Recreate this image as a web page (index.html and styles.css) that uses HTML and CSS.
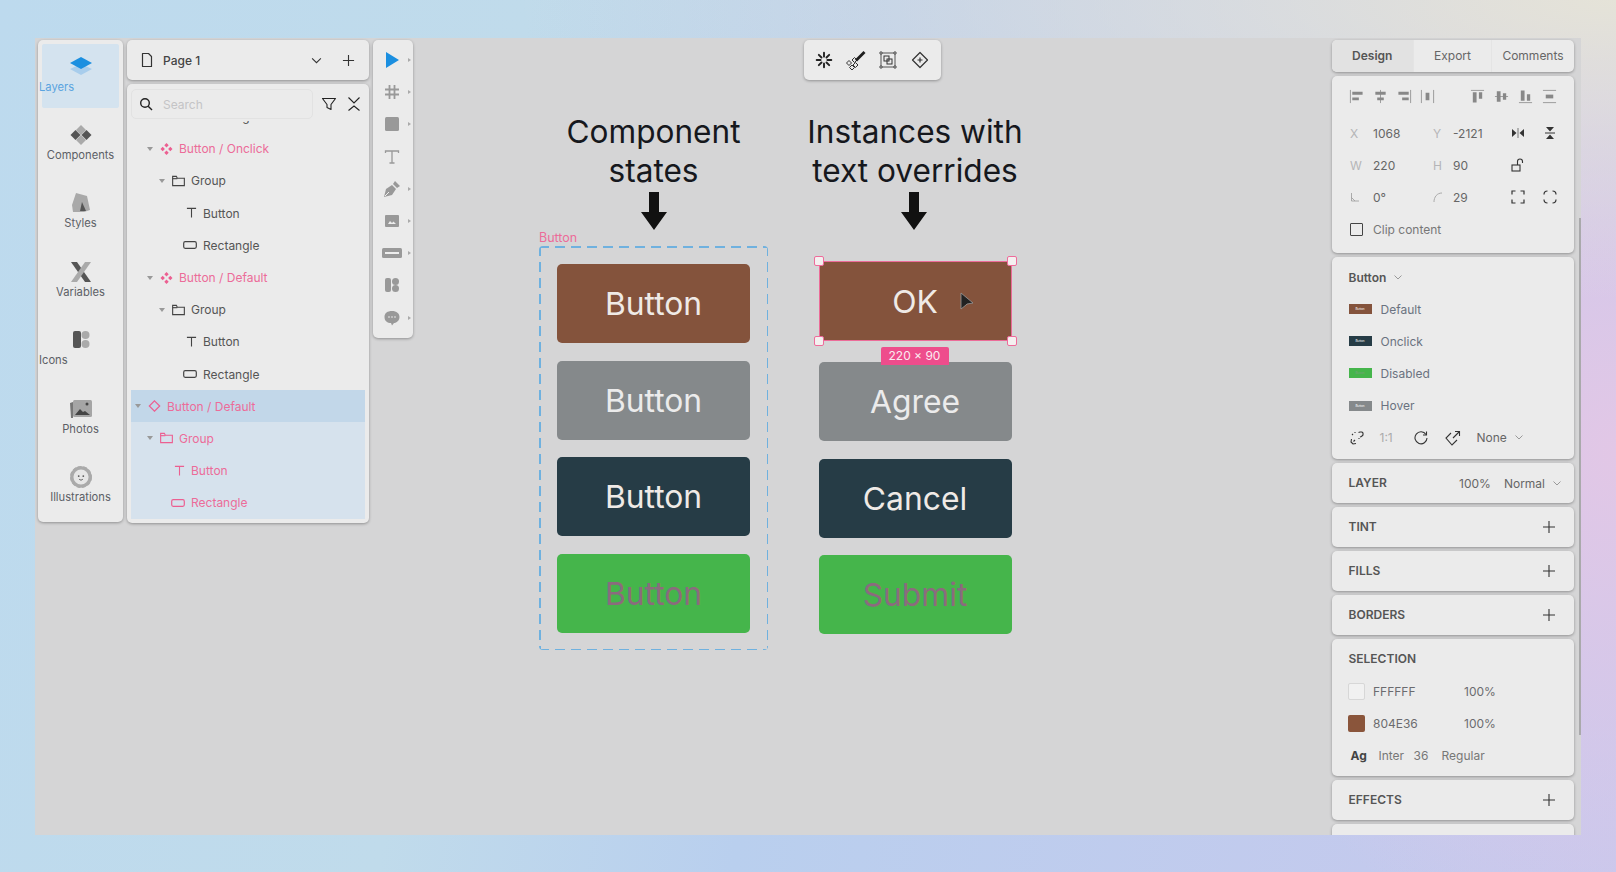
FILE: index.html
```html
<!DOCTYPE html>
<html lang="en">
<head>
<meta charset="utf-8">
<title>Button component</title>
<link rel="stylesheet" href="styles.css">
</head>
<body>
<main class="app">
  <section class="canvas">
    <div class="quick panel">
      <svg class="q" viewBox="0 0 16 16"><g stroke="#222" stroke-width="1.7" stroke-linecap="round"><path d="M8 1.5v3.500M8 11v3.500M1.500 8H5M11 8h3.500M3.400 3.400l2.400 2.400M10.200 10.200l2.400 2.400M3.400 12.600l2.400-2.400M10.200 5.800l2.400-2.400"/></g></svg>
      <svg class="q q-brush" viewBox="0 0 22 22"><path d="M7 11l2.500-2.500L12 11l-2.500 2.500zM1.500 14L4 11.500 6.500 14 4 16.500zM8 16l2.500-2.500L13 16l-2.500 2.500zM4.500 18.500L7 16l2.500 2.500L7 21z" fill="#e8e8e8" stroke="#333"/><path d="M10 10.500l8.500-8.500 2 2-8.500 8.500z" fill="#1d1d1d"/></svg>
      <svg class="q" viewBox="0 0 18 18"><rect x="2" y="2" width="14" height="14" fill="none" stroke="#555"/><g fill="#ddd" stroke="#444"><circle cx="2" cy="2" r="1.200"/><circle cx="16" cy="2" r="1.200"/><circle cx="2" cy="16" r="1.200"/><circle cx="16" cy="16" r="1.200"/></g><rect x="5" y="5" width="5" height="5" fill="none" stroke="#333"/><rect x="8" y="8" width="5" height="5" fill="none" stroke="#333"/></svg>
      <svg class="q" viewBox="0 0 18 18"><path d="M9 1.500L16.500 9 9 16.500 1.500 9z" fill="none" stroke="#333" stroke-width="1.200" stroke-linejoin="round"/><path d="M9 6.500v5M6.500 9h5" stroke="#333" stroke-width="1.200"/></svg>
    </div>

    <div class="board board-states">
      <h2 class="title">Component<br>states</h2>
      <svg class="arrow" viewBox="0 0 26 38"><path d="M8 0h10v20h8L13 38 0 20h8z" fill="#111"/></svg>
      <div class="set-name">Button</div>
      <div class="set">
        <div class="btn brown">Button</div>
        <div class="btn gray">Button</div>
        <div class="btn dark">Button</div>
        <div class="btn green">Button</div>
      </div>
    </div>

    <div class="board board-instances">
      <h2 class="title">Instances with<br>text overrides</h2>
      <svg class="arrow arrow-off" viewBox="0 0 26 38"><path d="M8 0h10v20h8L13 38 0 20h8z" fill="#111"/></svg>
      <div class="stack">
        <div class="btn brown selected">OK
          <i class="handle tl"></i><i class="handle tr"></i><i class="handle bl"></i><i class="handle br"></i>
          <svg class="cursor" viewBox="0 0 14 18"><path d="M1 1l12 10-6 1-1 1-5 4z" fill="#222" stroke="#999" stroke-width=".8"/></svg>
          <span class="size">220 × 90</span>
        </div>
        <div class="btn gray">Agree</div>
        <div class="btn dark">Cancel</div>
        <div class="btn green">Submit</div>
      </div>
    </div>
  </section>

  <aside class="left">
    <nav class="rail panel">
      <a class="rail-item active">
        <svg class="rail-icon" viewBox="0 0 22 20"><path d="M11 8L22 13 11 19 0 13z" fill="#a8cdec"/><path d="M11 1L22 7 11 13 0 7z" fill="#1b8fe0"/></svg>
        <span class="rail-label off">Layers</span>
      </a>
      <a class="rail-item">
        <svg class="rail-icon" viewBox="0 0 22 20"><path d="M11 0l5 5-5 5-5-5z" fill="#aaa"/><path d="M5.500 5l5 5-5 5-5-5z" fill="#555"/><path d="M16.500 5l5 5-5 5-5-5z" fill="#555"/><path d="M11 10l5 5-5 5-5-5z" fill="#aaa"/></svg>
        <span class="rail-label">Components</span>
      </a>
      <a class="rail-item">
        <svg class="rail-icon" viewBox="0 0 22 20"><path d="M6 0l11 3 3 14-6 2H3L2 12z" fill="#a9a9a9"/><path d="M12 9l4 9h-6z" fill="#555"/></svg>
        <span class="rail-label">Styles</span>
      </a>
      <a class="rail-item">
        <svg class="rail-icon" viewBox="0 0 22 20"><path d="M1 0h6l14 20h-6z" fill="#555"/><path d="M21 0h-6L1 20h6z" fill="#aaa"/></svg>
        <span class="rail-label">Variables</span>
      </a>
      <a class="rail-item">
        <svg class="rail-icon" viewBox="0 0 22 20"><rect x="3" y="1" width="8" height="17" rx="2" fill="#555"/><circle cx="15.500" cy="5" r="4" fill="#aaa"/><circle cx="15.500" cy="14" r="4" fill="#aaa"/></svg>
        <span class="rail-label off">Icons</span>
      </a>
      <a class="rail-item">
        <svg class="rail-icon" viewBox="0 0 22 20"><path d="M0 4l3-1v16H1z" fill="#777"/><rect x="3" y="1" width="19" height="17" rx="1.500" fill="#a5a5a5"/><path d="M5 16l5-6 3 3 2-1 5 4z" fill="#444"/><circle cx="17" cy="5" r="1.500" fill="#444"/></svg>
        <span class="rail-label">Photos</span>
      </a>
      <a class="rail-item">
        <svg class="rail-icon" viewBox="0 0 24 24"><circle cx="12" cy="12" r="10" fill="#e6e6e6" stroke="#aaa" stroke-width="3.500"/><circle cx="12" cy="12" r="11" fill="none" stroke="#aaa" stroke-width="2" stroke-dasharray="4 2"/><circle cx="9.500" cy="11" r="1" fill="#555"/><circle cx="14.500" cy="11" r="1" fill="#555"/><path d="M10 14.500q2 2 4 0" stroke="#555" fill="none"/></svg>
        <span class="rail-label">Illustrations</span>
      </a>
    </nav>

    <div class="middle">
      <header class="page-bar panel">
        <svg class="i16" viewBox="0 0 16 16"><path d="M3.500 1.500h6l3 3v10h-9z" fill="none" stroke="#333" stroke-width="1.200" stroke-linejoin="round"/></svg>
        <span class="page-name">Page 1</span>
        <svg class="page-chevron" viewBox="0 0 12 8"><path d="M1 1.500l5 5 5-5" fill="none" stroke="#333" stroke-width="1.200"/></svg>
        <svg class="plus" viewBox="0 0 14 14"><path d="M7 1v12M1 7h12" stroke="#333" stroke-width="1.200"/></svg>
      </header>

      <section class="layers panel">
        <div class="search-row">
          <div class="search">
            <svg class="i14" viewBox="0 0 14 14"><circle cx="6" cy="6" r="4.300" fill="none" stroke="#222" stroke-width="1.400"/><path d="M9.200 9.200L13 13" stroke="#222" stroke-width="1.400"/></svg>
            <span class="search-text">Search</span>
          </div>
          <svg class="i16 filter" viewBox="0 0 16 16"><path d="M1.500 2.500h13L10 8.500v5l-4-2v-3z" fill="none" stroke="#222" stroke-width="1.100" stroke-linejoin="round"/></svg>
          <svg class="i16" viewBox="0 0 16 16"><path d="M2.500 1.500L8 7l5.500-5.500M2.500 14.500L8 10l5.500 4.500" fill="none" stroke="#222" stroke-width="1.100"/></svg>
        </div>
        <ul class="tree">
          <li class="row d3"><svg class="ico rect" viewBox="0 0 14 8"><rect x=".7" y=".7" width="12.600" height="6.600" rx="1.500"/></svg>Rectangle</li>
          <li class="row d1 comp"><b class="caret"></b><svg class="ico" viewBox="0 0 12 12"><path class="fillp" d="M6 0l2.200 2.200L6 4.400 3.800 2.200zM2.200 3.800l2.200 2.200-2.200 2.200L0 6zM9.800 3.800L12 6 9.800 8.200 7.600 6zM6 7.600l2.200 2.200L6 12 3.800 9.800z"/></svg>Button / Onclick</li>
          <li class="row d2"><b class="caret"></b><svg class="ico folder" viewBox="0 0 14 12"><path d="M.7 11V1h4l1 2h7.600v8z"/><path d="M.7 3.500h5"/></svg>Group</li>
          <li class="row d3"><svg class="ico t" viewBox="0 0 12 12"><path d="M1 1h10M6 1v10"/></svg>Button</li>
          <li class="row d3"><svg class="ico rect" viewBox="0 0 14 8"><rect x=".7" y=".7" width="12.600" height="6.600" rx="1.500"/></svg>Rectangle</li>
          <li class="row d1 comp"><b class="caret"></b><svg class="ico" viewBox="0 0 12 12"><path class="fillp" d="M6 0l2.200 2.200L6 4.400 3.800 2.200zM2.200 3.800l2.200 2.200-2.200 2.200L0 6zM9.800 3.800L12 6 9.800 8.200 7.600 6zM6 7.600l2.200 2.200L6 12 3.800 9.800z"/></svg>Button / Default</li>
          <li class="row d2"><b class="caret"></b><svg class="ico folder" viewBox="0 0 14 12"><path d="M.7 11V1h4l1 2h7.600v8z"/><path d="M.7 3.500h5"/></svg>Group</li>
          <li class="row d3"><svg class="ico t" viewBox="0 0 12 12"><path d="M1 1h10M6 1v10"/></svg>Button</li>
          <li class="row d3"><svg class="ico rect" viewBox="0 0 14 8"><rect x=".7" y=".7" width="12.600" height="6.600" rx="1.500"/></svg>Rectangle</li>
          <li class="row d0 comp sel-main"><b class="caret"></b><svg class="ico" viewBox="0 0 12 12"><path d="M6 .8L11.200 6 6 11.200.8 6z"/></svg>Button / Default</li>
          <li class="row d1 comp sel"><b class="caret"></b><svg class="ico folder" viewBox="0 0 14 12"><path d="M.7 11V1h4l1 2h7.600v8z"/><path d="M.7 3.500h5"/></svg>Group</li>
          <li class="row d2-t comp sel"><svg class="ico t" viewBox="0 0 12 12"><path d="M1 1h10M6 1v10"/></svg>Button</li>
          <li class="row d2-t comp sel"><svg class="ico rect" viewBox="0 0 14 8"><rect x=".7" y=".7" width="12.600" height="6.600" rx="1.500"/></svg>Rectangle</li>
        </ul>
      </section>
    </div>

    <div class="tools panel">
      <div class="tool more"><svg viewBox="0 0 16 16"><path d="M2 0l13 8-13 8z" fill="#1b8fe0"/></svg></div>
      <div class="tool more"><svg viewBox="0 0 16 16"><path d="M5.500 1v14M10.500 1v14M1 5.500h14M1 10.500h14" stroke="#999" stroke-width="1.800" fill="none"/></svg></div>
      <div class="tool more"><svg viewBox="0 0 16 16"><rect x="1" y="1" width="14" height="14" rx="1.500" fill="#999"/></svg></div>
      <div class="tool"><svg viewBox="0 0 16 16"><path d="M1.500 4V2h13v2M8 2v12M5.500 14h5" stroke="#999" stroke-width="1.300" fill="none"/></svg></div>
      <div class="tool more"><svg viewBox="0 0 16 16"><path d="M0 16l2-8 6-4 4 4-4 6zM9 3l2-3 5 5-3 2z" fill="#999"/><path d="M1 15l4-4" stroke="#eee"/></svg></div>
      <div class="tool more"><svg viewBox="0 0 16 16"><rect x="1" y="2" width="14" height="12" rx="1" fill="#999"/><path d="M4 11l2-3 2 2 1.500-1.500L12 11z" fill="#eee"/></svg></div>
      <div class="tool more"><svg class="wide" viewBox="0 0 20 10"><rect width="20" height="10" rx="1.500" fill="#999"/><rect x="3" y="4" width="14" height="2" fill="#eee"/></svg></div>
      <div class="tool"><svg viewBox="0 0 16 16"><rect x="1" y="1" width="6" height="14" rx="2" fill="#999"/><circle cx="11.500" cy="4.500" r="3.500" fill="#999"/><circle cx="11.500" cy="11.500" r="3.500" fill="#999"/></svg></div>
      <div class="tool more"><svg viewBox="0 0 16 16"><path d="M8 1c4.500 0 7.500 2.500 7.500 6S12.500 13 10 13l-2 2.500L7 13C3.500 13 .5 11 .5 7S3.500 1 8 1z" fill="#999"/><g fill="#eee"><circle cx="5" cy="7" r=".8"/><circle cx="8" cy="7" r=".8"/><circle cx="11" cy="7" r=".8"/></g></svg></div>
    </div>
  </aside>

  <aside class="right">
    <div class="tabs panel">
      <span class="tab on">Design</span>
      <span class="tab mid">Export</span>
      <span class="tab">Comments</span>
    </div>

    <section class="card panel geometry">
      <div class="aligns">
        <svg viewBox="0 0 16 16"><path d="M1.500 1v14" stroke="#999"/><path d="M3.500 3h11v3h-11zM3.500 9h7v3h-7z" fill="#888"/></svg>
        <svg viewBox="0 0 16 16"><path d="M8 1v14" stroke="#999"/><path d="M2.500 3h11v3h-11zM4.500 9h7v3h-7z" fill="#888"/></svg>
        <svg viewBox="0 0 16 16"><path d="M14.500 1v14" stroke="#999"/><path d="M1.500 3h11v3h-11zM5.500 9h7v3h-7z" fill="#888"/></svg>
        <svg viewBox="0 0 16 16"><path d="M1.500 1v14M14.500 1v14" stroke="#999"/><rect x="6" y="4" width="4" height="8" fill="#888"/></svg>
        <span class="aligns-gap"></span>
        <svg viewBox="0 0 16 16"><path d="M1 1.500h14" stroke="#999"/><path d="M3 3.500h4v11H3zM9.500 3.500h3.500v7H9.500z" fill="#888"/></svg>
        <svg viewBox="0 0 16 16"><path d="M1 8h14" stroke="#999"/><path d="M3 2.500h4v11H3zM9.500 4.500h3.500v7H9.500z" fill="#888"/></svg>
        <svg viewBox="0 0 16 16"><path d="M1 14.500h14" stroke="#999"/><path d="M3 1.500h4v11H3zM9.500 5.500h3.500v7H9.500z" fill="#888"/></svg>
        <svg viewBox="0 0 16 16"><path d="M1 1.500h14M1 14.500h14" stroke="#999"/><rect x="4" y="6" width="8" height="4" fill="#888"/></svg>
      </div>
      <div class="fields">
        <span class="lab">X</span><span class="val">1068</span><span class="lab">Y</span><span class="val">-2121</span>
        <svg class="fi" viewBox="0 0 14 14"><path d="M1 3l4.500 4L1 11zM13 3L8.500 7l4.500 4z" fill="#333"/><path d="M7 2v10" stroke="#777"/></svg>
        <svg class="fi" viewBox="0 0 14 14"><path d="M3 1h8L7 5.500zM3 13l4-4.500 4 4.500z" fill="#333"/><path d="M2 7h10" stroke="#333"/></svg>
        <span class="lab">W</span><span class="val">220</span><span class="lab">H</span><span class="val">90</span>
        <svg class="fi" viewBox="0 0 14 14"><rect x="1" y="7" width="8" height="6" fill="none" stroke="#333" stroke-width="1.100"/><path d="M6.500 7V3.500a2.500 2.500 0 0 1 5 0V5" fill="none" stroke="#333" stroke-width="1.100"/></svg>
        <span></span>
        <span class="lab lab-ic"><svg viewBox="0 0 10 10"><path d="M1.500 1v8h7.500M1.500 5.500L5 9" fill="none" stroke="#999" stroke-width=".8"/></svg></span><span class="val">0°</span>
        <span class="lab lab-ic"><svg viewBox="0 0 10 10"><path d="M1 10C1 5 4 1 9 1" fill="none" stroke="#aaa"/></svg></span><span class="val">29</span>
        <svg class="fi" viewBox="0 0 14 14"><path d="M1 4.500V1h3.500M9.500 1H13v3.500M13 9.500V13H9.500M4.500 13H1V9.500" fill="none" stroke="#333" stroke-width="1.200"/></svg>
        <svg class="fi" viewBox="0 0 14 14"><path d="M1 4.500Q1 1 4.500 1M9.500 1Q13 1 13 4.500M13 9.500Q13 13 9.500 13M4.500 13Q1 13 1 9.500" fill="none" stroke="#333" stroke-width="1.200"/></svg>
      </div>
      <div class="clip"><i class="check"></i>Clip content</div>
    </section>

    <section class="card panel variants">
      <div class="v-title"><strong>Button</strong><svg class="chev" viewBox="0 0 8 5"><path d="M.5.500L4 4 7.500.500" fill="none" stroke="#999"/></svg></div>
      <div class="v-row"><span class="thumb t-brown">Button</span>Default</div>
      <div class="v-row"><span class="thumb t-dark">Button</span>Onclick</div>
      <div class="v-row"><span class="thumb t-green">Button</span>Disabled</div>
      <div class="v-row"><span class="thumb t-gray">Button</span>Hover</div>
      <div class="v-tools">
        <svg class="vt-link" viewBox="0 0 14 14"><path d="M5 9L3.500 10.500M1.500 8l-.5 3 2 2 3-.5M8.500 1.500l1.500-.5h2l1 1v2l-1.500 1.500-1.500.5M9 7v1M2 3l1 1M5 1v1" fill="none" stroke="#333" stroke-width="1.100"/></svg>
        <span class="vt-ratio">1:1</span>
        <svg class="vt-refresh" viewBox="0 0 14 14"><path d="M12 3.500A6 6 0 1 0 13 7" fill="none" stroke="#333" stroke-width="1.100"/><path d="M12.500 .5v3.500H9" fill="none" stroke="#333" stroke-width="1.100"/></svg>
        <svg class="vt-tag" viewBox="0 0 16 16"><path d="M6 3L1 8l6 7 5-5" fill="none" stroke="#333" stroke-width="1.100"/><path d="M8 8l6-6M10 1.500h4.500V6" fill="none" stroke="#333" stroke-width="1.100"/></svg>
        <span class="vt-none">None</span>
        <svg class="chev" viewBox="0 0 8 5"><path d="M.5.500L4 4 7.500.500" fill="none" stroke="#999"/></svg>
      </div>
    </section>

    <section class="card panel head layer">
      <h3>LAYER</h3><span class="pct">100%</span><span class="mode">Normal</span><svg class="chev" viewBox="0 0 8 5"><path d="M.5.500L4 4 7.500.500" fill="none" stroke="#999"/></svg>
    </section>
    <section class="card panel head"><h3>TINT</h3><svg class="add" viewBox="0 0 12 12"><path d="M6 0v12M0 6h12" stroke="#333" stroke-width="1.100"/></svg></section>
    <section class="card panel head"><h3>FILLS</h3><svg class="add" viewBox="0 0 12 12"><path d="M6 0v12M0 6h12" stroke="#333" stroke-width="1.100"/></svg></section>
    <section class="card panel head"><h3>BORDERS</h3><svg class="add" viewBox="0 0 12 12"><path d="M6 0v12M0 6h12" stroke="#333" stroke-width="1.100"/></svg></section>

    <section class="card panel selection">
      <h3>SELECTION</h3>
      <div class="s-row"><i class="swatch white"></i><span class="hex">FFFFFF</span><span>100%</span></div>
      <div class="s-row"><i class="swatch brownish"></i><span class="hex">804E36</span><span>100%</span></div>
      <div class="s-font"><strong>Ag</strong><span class="f1">Inter</span><span class="f2">36</span><span>Regular</span></div>
    </section>

    <section class="card panel head"><h3>EFFECTS</h3><svg class="add" viewBox="0 0 12 12"><path d="M6 0v12M0 6h12" stroke="#333" stroke-width="1.100"/></svg></section>
    <section class="card panel head"></section>
  </aside>
  <div class="scrollbar"></div>
</main>
</body>
</html>
```

FILE: styles.css
```css
* { box-sizing: border-box; }
html, body { height: 100%; }
body {
  margin: 0;
  overflow: hidden;
  font-family: Inter, "Liberation Sans", sans-serif;
  background:
    radial-gradient(ellipse 1100px 300px at 100% 0%, #e5e3d8 0%, rgba(229,227,216,0) 100%),
    radial-gradient(ellipse 420px 520px at 100% 52%, #e2c7e6 0%, rgba(226,199,230,0) 100%),
    linear-gradient(100deg, #bddaee 0%, #c0dbeb 30%, #b9cfee 50%, #c7c8ed 100%);
  padding: 38px 35px 37px 35px;
}
.app {
  position: relative;
  width: 1546px;
  height: 797px;
  background: #d5d5d6;
  overflow: hidden;
  color: #555;
  font-size: 12px;
}
.panel {
  background: #ebebeb;
  border-radius: 5px;
  box-shadow: 0 1px 3px rgba(0,0,0,.32);
}
svg { display: block; flex: none; }

/* canvas */
.canvas { position: absolute; inset: 0; }
.quick {
  position: absolute; left: 769px; top: 2px;
  width: 137px; height: 40px;
  display: flex; align-items: center;
  gap: 14px; padding: 0 11px;
}
.q { width: 18px; height: 18px; }
.q-brush { width: 22px; height: 22px; margin: 0 -2px; }
.board { position: absolute; display: flex; flex-direction: column; align-items: center; }
.board-states { left: 502px; top: 75px; width: 233px; }
.board-instances { left: 780px; top: 75px; width: 200px; }
.title {
  margin: 0; white-space: nowrap; text-align: center;
  font-weight: 400; font-size: 31.600px; line-height: 38.500px; color: #16181d;
}
.arrow { width: 26px; height: 38px; margin-top: 2px; }
.arrow-off { margin-right: 3px; }
.set-name {
  align-self: flex-start; height: 16px; line-height: 15px; margin-left: 2px;
  color: #ec6c99; font-size: 12.500px;
}
.set {
  display: flex; flex-direction: column; gap: 17.500px;
  width: 229px; height: 404px; padding: 1px 18px 0; justify-content: center;
  border-radius: 4px;
  background:
    linear-gradient(90deg, #6fb1df 60%, transparent 0) 0 0 / 16px 1.500px repeat-x,
    linear-gradient(90deg, #6fb1df 60%, transparent 0) 0 100% / 16px 1.500px repeat-x,
    linear-gradient(#6fb1df 60%, transparent 0) 0 0 / 1.500px 16px repeat-y,
    linear-gradient(#6fb1df 60%, transparent 0) 100% 0 / 1.500px 16px repeat-y;
}
.btn {
  position: relative; flex: none;
  display: flex; align-items: center; justify-content: center;
  width: 193px; height: 79px; border-radius: 5px;
  font-size: 31.800px; color: #efeae6;
}
.brown { background: #84533c; }
.gray { background: #85898b; color: #ebebeb; }
.dark { background: #263c46; }
.green { background: #45b54b; color: #8b6b7e; }
.stack { display: flex; flex-direction: column; gap: 17.500px; margin-top: 31px; }
.selected {
  height: 80px; margin-bottom: 3.500px; border-radius: 0;
  outline: 1.500px solid #ec6c99; outline-offset: -1px;
}
.handle {
  position: absolute; width: 10px; height: 10px;
  background: #f4f0f0; border: 1.500px solid #ee6c9b; border-radius: 2px;
}
.tl { left: -5px; top: -5px; }
.tr { right: -5px; top: -5px; }
.bl { left: -5px; bottom: -5px; }
.br { right: -5px; bottom: -5px; }
.cursor { position: absolute; left: 141px; top: 31px; width: 14px; height: 18px; }
.size {
  position: absolute; left: 62px; top: 86px; z-index: 2;
  width: 68px; height: 18px; line-height: 18px; text-align: center;
  background: #ee4d8c; color: #fbeaf1; font-size: 12px; border-radius: 2px 2px 0 0;
}

/* left side */
.left {
  position: absolute; left: 3px; top: 2px;
  display: flex; align-items: flex-start; gap: 4px;
}
.rail { width: 85px; height: 482px; padding: 4px; }
.rail-item {
  display: flex; flex-direction: column; align-items: center;
  height: 68.500px; padding-top: 11px; border-radius: 2px;
}
.rail-item.active { height: 64px; margin-bottom: 4.500px; background: #d4e3ef; }
.rail-icon { width: 22px; height: 22px; }
.rail-label {
  margin-top: 1px; font-size: 11.200px; line-height: 16px; white-space: nowrap; color: #5c5f66;
}
.active .rail-label { color: #5aa4e0; margin-top: 2px; }
.rail-label.off { align-self: flex-start; margin-left: -3px; }
.middle { display: flex; flex-direction: column; gap: 4px; width: 242px; }
.page-bar {
  height: 40px; display: flex; align-items: center; padding: 0 14px 0 12px;
  font-size: 12px; font-weight: 500; color: #444;
}
.i16 { width: 16px; height: 16px; }
.i14 { width: 14px; height: 14px; }
.page-name { margin-left: 8px; flex: 1; }
.page-chevron { width: 11px; height: 7px; margin-right: 20px; }
.plus { width: 13px; height: 13px; }
.layers { height: 439px; padding: 5px 4px 4px; position: relative; }
.search-row {
  display: flex; align-items: center; height: 30px; position: relative; z-index: 1;
  background: #ebebeb; box-shadow: 0 2px 0 #ebebeb;
}
.search {
  display: flex; align-items: center; gap: 10px;
  width: 182px; height: 30px; padding: 0 7px;
  border: 1px solid #e2e2e2; border-radius: 5px; margin-right: 8px;
}
.filter { margin-right: 9px; }
.search-text { color: #c4c4c6; font-size: 12px; }
.tree {
  list-style: none; margin: -18.500px 0 0; padding: 0;
  height: 418.600px; overflow: hidden;
}
.row {
  display: flex; align-items: center; height: 32.200px; gap: 5px;
  white-space: nowrap; color: #555; font-size: 12px;
}
.d0 { padding-left: 4px; }
.d1 { padding-left: 16px; }
.d2 { padding-left: 28px; }
.d2-t { padding-left: 41px; }
.d3 { padding-left: 53px; }
.comp { color: #ec6c99; }
.sel-main { background: #c2d7e9; }
.sel { background: #d6e2ed; }
.caret {
  width: 0; height: 0; margin-right: 2px;
  border: 3.500px solid transparent; border-top: 4.500px solid #999; border-bottom: 0;
}
.ico { width: 13px; height: 12px; margin-right: 1px; fill: none; stroke: #444; stroke-width: 1.200; }
.d3 .ico.t, .d2-t .ico.t { margin-left: 2px; width: 11px; }
.ico.rect { width: 14px; height: 8px; margin-left: -1px; }
.comp .ico { stroke: #ec5f91; }
.fillp { fill: #ec5f91; stroke: none; }

.tools { width: 40px; height: 298px; padding: 4px 0; }
.tool {
  position: relative; height: 32.200px;
  display: flex; align-items: center; justify-content: center;
  padding-right: 2px;
}
.tool svg { width: 16px; height: 16px; }
.tool svg.wide { width: 20px; height: 10px; }
.more::after {
  content: ""; position: absolute; right: 2px; top: 14px;
  border-left: 3px solid #aaa; border-top: 2px solid transparent; border-bottom: 2px solid transparent;
}

/* right side */
.right {
  position: absolute; left: 1296.500px; top: 2px; width: 242.500px;
  display: flex; flex-direction: column; gap: 4px;
}
.tabs {
  display: grid; grid-template-columns: 81.500px 79px 1fr;
  height: 32px; flex: none; overflow: hidden;
  font-size: 12px; color: #666; text-align: center; line-height: 32px;
}
.tab.on { background: #e2e2e2; font-weight: 600; color: #555; }
.tab.mid { border-left: 1px solid #e4e4e4; border-right: 1px solid #e4e4e4; }
.card { flex: none; padding-left: 17px; }
.geometry { height: 177px; padding-top: 4px; padding-left: 18.500px; }
.aligns { display: flex; align-items: center; height: 32px; gap: 8.800px; margin-left: -1px; }
.aligns svg { width: 15px; height: 15px; }
.aligns-gap { width: 26px; margin-right: -8.800px; }
.fields {
  display: grid; margin-top: 5px;
  grid-template-columns: 23px 60px 20px 57px 32px 32px;
  grid-auto-rows: 32px; align-items: center; color: #666;
}
.lab { color: #b5b5b7; }
.lab-ic svg { width: 10px; height: 10px; }
.fi { width: 14px; height: 14px; margin-left: 1px; }
.clip { display: flex; align-items: center; gap: 10px; height: 32px; color: #777; }
.check { width: 13px; height: 13px; border: 1.500px solid #444; border-radius: 1px; }
.variants { height: 202px; padding-top: 4px; }
.v-title { display: flex; align-items: center; gap: 8px; height: 32px; color: #555; font-size: 12px; }
.v-title strong { font-weight: 600; }
.chev { width: 8px; height: 5px; }
.v-row { display: flex; align-items: center; height: 32.200px; gap: 9px; color: #6a7280; }
.thumb {
  display: block; width: 23px; height: 10px; color: #fff; text-align: center;
  font-size: 3px; line-height: 10px;
}
.t-brown { background: #84533c; }
.t-dark { background: #263c46; }
.t-green { background: #45b54b; color: #7aa07e; }
.t-gray { background: #85898b; }
.v-tools { display: flex; align-items: center; height: 32px; color: #666; }
.vt-link { width: 14px; height: 14px; margin-left: 1px; }
.vt-ratio { margin-left: 16px; color: #aaa; width: 25px; }
.vt-refresh { width: 14px; height: 14px; margin-left: 9px; }
.vt-tag { width: 16px; height: 16px; margin-left: 17px; }
.vt-none { margin-left: 16px; margin-right: 8px; }
.head { display: flex; align-items: center; height: 40px; padding-right: 19px; position: relative; }
h3 { margin: 0; font-size: 12px; font-weight: 600; color: #555; padding-bottom: 2px; }
.head h3 { flex: 1; }
.add { width: 12px; height: 12px; }
.pct { margin-right: 13px; color: #666; }
.mode { margin-right: 8px; color: #666; }
.layer { padding-right: 13px; }
.selection { height: 137px; padding-top: 9px; }
.selection h3 { height: 27px; line-height: 21px; }
.s-row { display: grid; grid-template-columns: 24.500px 91px 1fr; align-items: center; height: 32px; color: #6b6b6f; }
.swatch { width: 17px; height: 17px; border-radius: 2px; margin-left: -1px; }
.white { background: #f1f1f1; border: 1px solid #d7d7d7; }
.brownish { background: #8a553b; }
.s-font { display: flex; align-items: center; height: 32px; color: #777; margin-left: 2px; }
.s-font strong { font-weight: 700; color: #444; width: 28px; }
.f1 { width: 35px; }
.f2 { width: 28px; }
.scrollbar {
  position: absolute; right: 0; top: 180px; width: 2.500px; height: 517px;
  background: #a9a9ab;
}
```
